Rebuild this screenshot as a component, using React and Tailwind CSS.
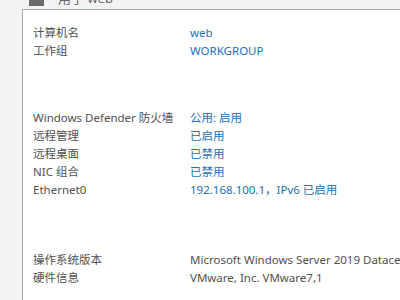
import React from "react";

const font = { fontFamily: '"Noto Sans", "Noto Sans CJK SC", sans-serif' };

const Row = ({ label, value, link = true }) => (
  <div className="flex h-[18px] items-center">
    <div className="w-[157px] shrink-0 text-[#505050]">{label}</div>
    <div className={link ? "whitespace-nowrap text-[#2270b8]" : "whitespace-nowrap text-[#505050]"}>{value}</div>
  </div>
);

const App = () => {
  return (
    <div className="h-[300px] w-[400px] overflow-hidden bg-[#f3f3f3] text-[11.5px]" style={font}>
      {/* title strip */}
      <div className="relative h-[9px]">
        <div className="absolute left-[29px] top-0 h-[6px] w-[15px] bg-[#6b6b6b]"></div>
        <div className="absolute left-[58px] top-[-11px] text-[13px] text-[#666]">用于 web</div>
      </div>

      {/* panel */}
      <div className="ml-[22px] h-[291px] border-l border-t border-[#a8a8a8] bg-white pl-[10px] pt-[14px]">
        <Row label="计算机名" value="web" />
        <Row label="工作组" value="WORKGROUP" />

        <div className="h-[49px]"></div>
        <Row label="Windows Defender 防火墙" value="公用: 启用" />
        <Row label="远程管理" value="已启用" />
        <Row label="远程桌面" value="已禁用" />
        <Row label="NIC 组合" value="已禁用" />
        <Row label="Ethernet0" value="192.168.100.1，IPv6 已启用" />

        <div className="h-[52px]"></div>
        <Row label="操作系统版本" value="Microsoft Windows Server 2019 Datacenter" link={false} />
        <Row label="硬件信息" value="VMware, Inc. VMware7,1" link={false} />
      </div>
    </div>
  );
};

export default App;
